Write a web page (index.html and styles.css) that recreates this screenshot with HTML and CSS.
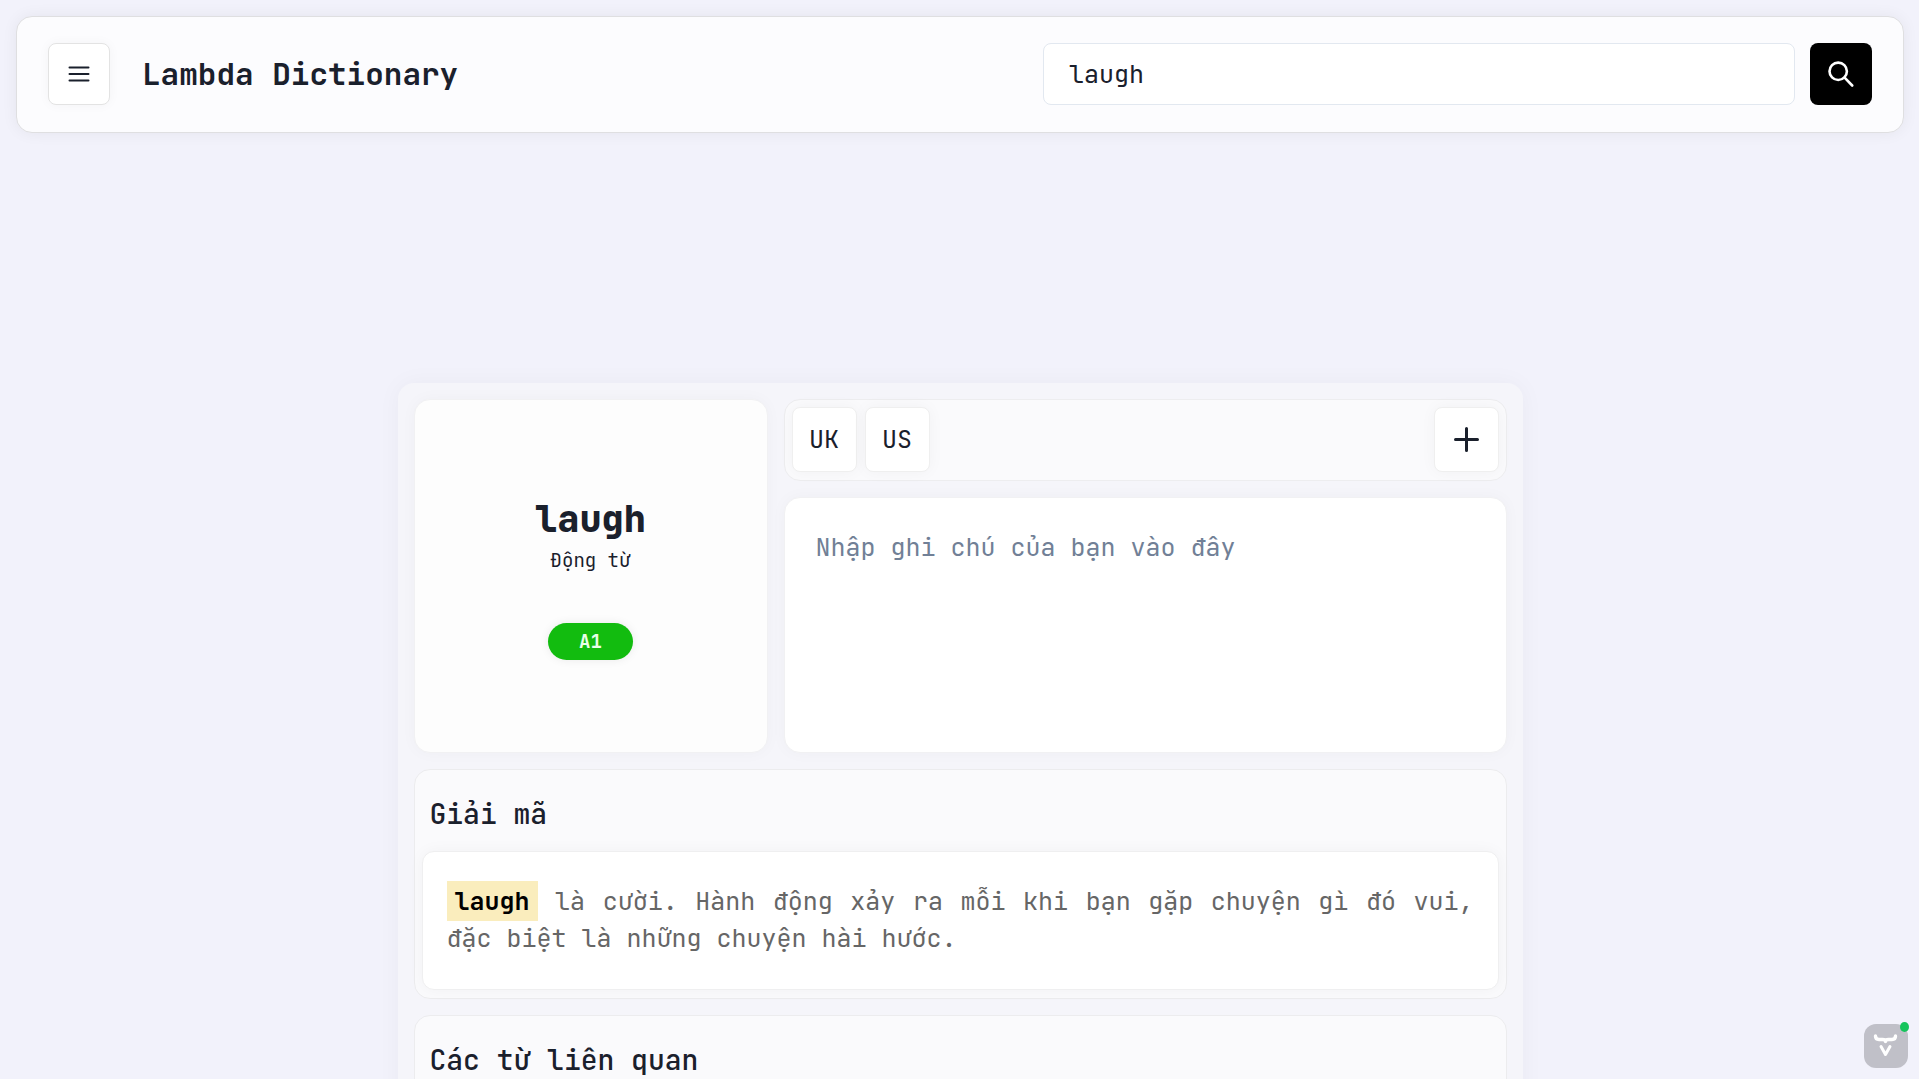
FILE: index.html
```html
<!DOCTYPE html>
<html lang="vi">
<head>
<meta charset="utf-8">
<meta name="viewport" content="width=device-width, initial-scale=1">
<title>Lambda Dictionary</title>
<link rel="stylesheet" href="styles.css">
</head>
<body>
<div class="page">
  <header class="topbar">
    <div class="brand">
      <button class="icon-button" type="button" aria-label="Menu">
        <svg width="22" height="16" viewBox="0 0 22 16" fill="none" stroke="currentColor" stroke-width="2" stroke-linecap="round"><path d="M1.500 1.500h19M1.500 8h19M1.500 14.500h19"/></svg>
      </button>
      <h1 class="title">Lambda Dictionary</h1>
    </div>
    <form class="search" role="search">
      <input class="search-input" type="text" value="laugh" aria-label="Search">
      <button class="search-button" type="submit" aria-label="Search">
        <svg width="26" height="26" viewBox="0 0 26 26" fill="none" stroke="currentColor" stroke-width="2.600" stroke-linecap="round"><circle cx="10.200" cy="10.300" r="8.700"/><path d="M16.600 16.700l7.600 7.800"/></svg>
      </button>
    </form>
  </header>

  <main class="entry">
    <div class="summary">
      <section class="word-card">
        <h2 class="word">laugh</h2>
        <p class="word-class">Động từ</p>
        <span class="level">A1</span>
      </section>
      <div class="side">
        <div class="toolbar">
          <button class="tool-button" type="button">UK</button>
          <button class="tool-button" type="button">US</button>
          <button class="tool-button tool-add" type="button" aria-label="Add">
            <svg width="27" height="27" viewBox="0 0 27 27" fill="none" stroke="currentColor" stroke-width="3" stroke-linecap="round"><path d="M13.500 2.500v22M2.500 13.500h22"/></svg>
          </button>
        </div>
        <textarea class="note" aria-label="Nhập ghi chú của bạn vào đây" placeholder="Nhập ghi chú của bạn vào đây"></textarea>
      </div>
    </div>

    <section class="panel">
      <h2 class="panel-title">Giải mã</h2>
      <p class="panel-text"><mark class="highlight">laugh</mark> là cười. Hành động xảy ra mỗi khi bạn gặp chuyện gì đó vui, đặc biệt là những chuyện hài hước.</p>
    </section>

    <section class="panel">
      <h2 class="panel-title">Các từ liên quan</h2>
    </section>
  </main>
</div>

<button class="widget" type="button" aria-label="Extension">
  <svg width="44" height="44" viewBox="0 0 44 44" fill="none" stroke="#fff" stroke-linecap="round" stroke-linejoin="round"><path d="M11.500 12c0 2.500 1 3.500 3.500 3.500h3.500c2 0 3 .5 3 2 0-1.500 1-2 3-2H28c2.500 0 3.500-1 3.500-3.500" stroke-width="3.400"/><path d="M17 22.500l4.500 8 4.500-8" stroke-width="3"/></svg>
  <span class="widget-status"></span>
</button>
</body>
</html>
```
FILE: styles.css
```css
* {
  box-sizing: border-box;
}

body {
  margin: 0;
  background: #f2f2fb;
  color: #1a202c;
  font-family: "JetBrains Mono", "DejaVu Sans Mono", monospace;
  font-size: 25px;
  line-height: 37px;
}

h1, h2, p {
  margin: 0;
}

button, input, textarea {
  font: inherit;
  color: inherit;
}

button {
  display: flex;
  align-items: center;
  justify-content: center;
  padding: 0;
  cursor: pointer;
}

.page {
  height: 100vh;
  padding: 16px 15px 16px 16px;
  overflow-y: auto;
  scrollbar-width: none;
}

.topbar {
  display: grid;
  grid-template-columns: 6fr 5fr;
  align-items: center;
  min-height: 117px;
  padding: 26px 31px 27px;
  background: #fcfcfe;
  border: 1px solid #dfdfe1;
  border-radius: 16px;
  box-shadow: 0 0 16px rgba(0, 0, 0, 0.06);
}

.brand {
  display: flex;
  align-items: center;
  gap: 32px;
}

.icon-button {
  width: 62px;
  height: 62px;
  background: #fff;
  border: 1px solid #e3e3e3;
  border-radius: 8px;
  box-shadow: 0 0 12px rgba(0, 0, 0, 0.04);
}

.title {
  padding-bottom: 2px;
  font-size: 31px;
  font-weight: 600;
}

.search {
  display: flex;
  gap: 15px;
}

.search-input {
  flex: 1;
  min-width: 0;
  height: 62px;
  padding: 0 25px;
  background: #fff;
  border: 1px solid #e2e8f0;
  border-radius: 8px;
  outline: none;
}

.search-button {
  width: 62px;
  height: 62px;
  background: #000;
  color: #fff;
  border: 0;
  border-radius: 8px;
}

.entry {
  display: flex;
  flex-direction: column;
  gap: 16px;
  max-width: 1125px;
  margin: 250px auto 0;
  padding: 16px;
  background: #f5f5fa;
  border-radius: 16px;
  box-shadow: 0 0 24px rgba(0, 0, 0, 0.04);
}

.summary {
  display: flex;
  gap: 16px;
}

.word-card {
  display: flex;
  flex-direction: column;
  align-items: center;
  justify-content: center;
  width: 354px;
  aspect-ratio: 1;
  background: #fdfdfd;
  border: 1px solid #f1f1f3;
  border-radius: 16px;
  box-shadow: 0 0 16px rgba(0, 0, 0, 0.03);
}

.word {
  font-size: 37px;
  font-weight: 800;
  line-height: 52px;
}

.word-class {
  font-size: 19px;
  line-height: 32px;
}

.level {
  margin-top: 46px;
  padding: 0 31px;
  background: #12bc0f;
  border-radius: 19px;
  box-shadow: 0 0 10px rgba(0, 0, 0, 0.08);
  color: #e8ffe8;
  font-size: 19px;
  font-weight: 700;
}

.side {
  display: flex;
  flex: 1;
  flex-direction: column;
  gap: 16px;
  min-width: 0;
}

.toolbar {
  display: flex;
  gap: 8px;
  padding: 7px 7px 8px;
  background: #fafafc;
  border: 1px solid #ededef;
  border-radius: 16px;
}

.tool-button {
  width: 65px;
  height: 65px;
  background: #fff;
  border: 1px solid #efefef;
  border-radius: 8px;
  box-shadow: 0 0 16px rgba(0, 0, 0, 0.04);
}

.tool-add {
  margin-left: auto;
}

.note {
  flex: 1;
  width: 100%;
  padding: 31px;
  background: #fff;
  border: 1px solid #f1f1f3;
  border-radius: 16px;
  box-shadow: 0 0 16px rgba(0, 0, 0, 0.03);
  outline: none;
  resize: none;
}

.note::placeholder {
  color: #718096;
  opacity: 1;
}

.panel {
  padding: 0 7px 8px;
  background: #fafafc;
  border: 1px solid #ececee;
  border-radius: 16px;
}

.panel-title {
  padding: 25px 8px 19px;
  font-size: 28px;
  font-weight: 500;
}

.panel-text {
  padding: 31px 24px 32px;
  background: #fff;
  border: 1px solid #efeff0;
  border-radius: 12px;
  box-shadow: 0 0 16px rgba(0, 0, 0, 0.04);
  color: #666;
  text-align: justify;
}

.highlight {
  padding: 3px 8px;
  background: #faedbd;
  color: #000;
  font-weight: 700;
}

.widget {
  position: fixed;
  right: 11px;
  bottom: 11px;
  width: 44px;
  height: 44px;
  background: #c0c0c8;
  border: 0;
  border-radius: 12px;
}

.widget-status {
  position: absolute;
  top: -2px;
  right: -1px;
  width: 9px;
  height: 10px;
  background: #16c45c;
  border-radius: 50%;
}
```
